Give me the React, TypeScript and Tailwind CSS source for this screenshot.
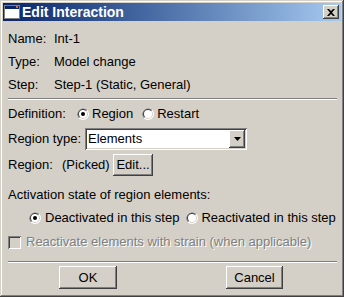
import React from "react";

const Radio = ({ checked }: { checked?: boolean }) => (
  <svg width="12" height="12" viewBox="0 0 12 12" className="shrink-0">
    <circle cx="6" cy="6" r="6" fill="#ffffff" />
    <path d="M1.76 10.24 A6 6 0 0 1 10.24 1.76 Z" fill="#808080" />
    <circle cx="6" cy="6" r="5" fill="#d4d0c8" />
    <path d="M2.46 9.54 A5 5 0 0 1 9.54 2.46 Z" fill="#404040" />
    <circle cx="6" cy="6" r="4" fill="#ffffff" />
    {checked && <circle cx="6" cy="6" r="2" fill="#000000" />}
  </svg>
);

const raised =
  "bg-[#d4d0c8] shadow-[inset_-1px_-1px_#404040,inset_1px_1px_#ffffff,inset_-2px_-2px_#808080,inset_2px_2px_#d4d0c8]";
const sunken =
  "shadow-[inset_1px_1px_#808080,inset_-1px_-1px_#ffffff,inset_2px_2px_#404040,inset_-2px_-2px_#d4d0c8]";

const Separator = () => (
  <div className="mr-[4px] h-[2px] border-t border-t-[#808080] border-b border-b-white" />
);

const App = () => {
  return (
    <div className="w-[344px] h-[297px] bg-[#d4d0c8] p-[3px] text-[13px] text-black font-['Liberation_Sans',Arial,sans-serif] shadow-[inset_-1px_-1px_#404040,inset_1px_1px_#d4d0c8,inset_-2px_-2px_#808080,inset_2px_2px_#ffffff] flex flex-col">
      {/* Title bar */}
      <div className="h-[18px] flex items-center bg-gradient-to-r from-[#0a246a] to-[#a6caf0] pl-[1px] pr-[2px]">
        <svg width="16" height="14" viewBox="0 0 16 14" className="shrink-0">
          <rect x="0.5" y="0.5" width="15" height="13" fill="#ffffff" stroke="#808080" />
          <rect x="1" y="1" width="14" height="3" fill="#0a246a" />
          <rect x="12" y="1" width="2" height="2" fill="#e07020" />
        </svg>
        <span className="ml-[2px] text-white font-bold text-[14px] leading-none">Edit Interaction</span>
        <div className={`ml-auto w-[16px] h-[14px] flex items-center justify-center ${raised}`}>
          <svg width="8" height="7" viewBox="0 0 8 7">
            <path d="M0 0 L2 0 L4 2 L6 0 L8 0 L5 3.5 L8 7 L6 7 L4 5 L2 7 L0 7 L3 3.5 Z" fill="#000" />
          </svg>
        </div>
      </div>

      {/* Body */}
      <div className="flex flex-col pl-[5px] pt-[6px]">
        <div className="h-[23px] flex items-center">
          <span className="w-[46px]">Name:</span>
          <span>Int-1</span>
        </div>
        <div className="h-[23px] flex items-center">
          <span className="w-[46px]">Type:</span>
          <span>Model change</span>
        </div>
        <div className="h-[23px] flex items-center">
          <span className="w-[46px]">Step:</span>
          <span>Step-1 (Static, General)</span>
        </div>

        <div className="mt-[2px]">
          <Separator />
        </div>

        <div className="mt-[3px] h-[22px] flex items-center">
          <span className="w-[69px]">Definition:</span>
          <Radio checked />
          <span className="ml-[3px]">Region</span>
          <span className="ml-[9px]">
            <Radio />
          </span>
          <span className="ml-[3px]">Restart</span>
        </div>

        <div className="mt-[3px] h-[22px] flex items-center">
          <span className="w-[77px]">Region type:</span>
          <div className={`w-[162px] h-[22px] bg-white flex items-center p-[2px] ${sunken}`}>
            <span className="flex-1 pl-[1px]">Elements</span>
            <div className={`w-[16px] h-[18px] flex items-center justify-center ${raised}`}>
              <svg width="7" height="4" viewBox="0 0 7 4">
                <path d="M0 0 L7 0 L3.5 4 Z" fill="#000" />
              </svg>
            </div>
          </div>
        </div>

        <div className="mt-[4px] h-[22px] flex items-center">
          <span className="w-[54px]">Region:</span>
          <span className="w-[51px]">(Picked)</span>
          <div className={`w-[40px] h-[22px] flex items-center justify-center ${raised}`}>Edit...</div>
        </div>

        <div className="mt-[9px] h-[20px] flex items-center">Activation state of region elements:</div>

        <div className="mt-[3px] h-[20px] flex items-center pl-[21px]">
          <Radio checked />
          <span className="ml-[4px]">Deactivated in this step</span>
          <span className="ml-[7px]">
            <Radio />
          </span>
          <span className="ml-[3px]">Reactivated in this step</span>
        </div>

        <div className="mt-[4px] h-[20px] flex items-center">
          <div className={`w-[13px] h-[13px] bg-[#d4d0c8] ${sunken}`} />
          <span className="ml-[5px] text-[#808080] [text-shadow:1px_1px_0_#ffffff]">
            Reactivate elements with strain (when applicable)
          </span>
        </div>

        <div className="mt-[9px]">
          <Separator />
        </div>

        <div className="mt-[3px] flex items-center">
          <div className={`ml-[51px] w-[58px] h-[23px] flex items-center justify-center ${raised}`}>OK</div>
          <div className={`ml-[109px] w-[57px] h-[23px] flex items-center justify-center ${raised}`}>Cancel</div>
        </div>
      </div>
    </div>
  );
};

export default App;
